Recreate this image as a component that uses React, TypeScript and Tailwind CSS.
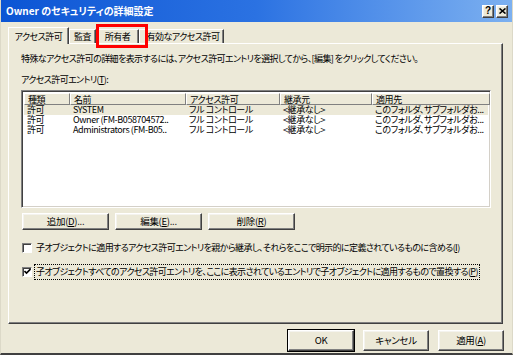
import React from "react";

type Entry = {
  kind: string;
  name: string;
  access: string;
  inherited: string;
  applies: string;
};

const ENTRIES: Entry[] = [
  { kind: "許可", name: "SYSTEM", access: "フル コントロール", inherited: "<継承なし>", applies: "このフォルダ、サブフォルダお..." },
  { kind: "許可", name: "Owner (FM-B058704572..", access: "フル コントロール", inherited: "<継承なし>", applies: "このフォルダ、サブフォルダお..." },
  { kind: "許可", name: "Administrators (FM-B05..", access: "フル コントロール", inherited: "<継承なし>", applies: "このフォルダ、サブフォルダお..." },
];

const COLUMNS = [
  { label: "種類", width: "w-[46px]" },
  { label: "名前", width: "w-[116px]" },
  { label: "アクセス許可", width: "w-[94px]" },
  { label: "継承元", width: "w-[92px]" },
  { label: "適用先", width: "w-[118px]" },
];

const raised =
  "border border-t-white border-l-white border-r-[#404040] border-b-[#404040] shadow-[inset_-1px_-1px_0_#808080,inset_1px_1px_0_#f4f3ee]";

function PushButton({ children, className = "" }: { children: React.ReactNode; className?: string }) {
  return (
    <div className={`flex items-center justify-center bg-[#ece9d8] ${raised} ${className}`}>
      <span className="text-[9.5px] leading-none whitespace-nowrap tracking-[-0.3px]">{children}</span>
    </div>
  );
}

function CheckBox({ checked }: { checked: boolean }) {
  return (
    <div className="w-[10px] h-[10px] shrink-0 bg-white border border-t-[#808080] border-l-[#808080] border-r-white border-b-white shadow-[inset_1px_1px_0_#404040] flex items-center justify-center">
      {checked ? (
        <svg width="7" height="7" viewBox="0 0 7 7">
          <path d="M0.5 3 L2.5 5 L6.5 1" stroke="#000" strokeWidth="1.6" fill="none" />
        </svg>
      ) : null}
    </div>
  );
}

export default function App() {
  return (
    <div className="w-[513px] h-[355px] overflow-hidden bg-[#ece9d8] text-black font-['Noto_Sans_CJK_JP','Noto_Sans',sans-serif] [font-feature-settings:'palt'] relative border-x border-x-[#dcd9c8] border-b-2 border-b-[#404040]">
      {/* title bar */}
      <div className="h-[22px] flex items-center pl-[5px] pr-[4px] bg-gradient-to-r from-[#0b55d4] via-[#2b72e2] to-[#7cb0f0]">
        <span className="text-white font-bold text-[10px] leading-none whitespace-nowrap">
          Owner のセキュリティの詳細設定
        </span>
        <div className="ml-auto flex gap-[2px]">
          <div className={`w-[12px] h-[13px] bg-[#ece9d8] flex items-center justify-center ${raised}`}>
            <span className="text-[10px] font-bold leading-none font-['Liberation_Sans',sans-serif]">?</span>
          </div>
          <div className={`w-[12px] h-[13px] bg-[#ece9d8] flex items-center justify-center ${raised}`}>
            <svg width="7" height="6" viewBox="0 0 7 6">
              <path d="M0.5 0.5 L6.5 5.5 M6.5 0.5 L0.5 5.5" stroke="#000" strokeWidth="1.6" />
            </svg>
          </div>
        </div>
      </div>

      <div className="px-[7px]">
        {/* tabs */}
        <div className="mt-[5px] h-[16px] flex items-end text-[9px] leading-none whitespace-nowrap tracking-[-0.5px]">
          <div className="w-[61px] h-[17px] -mb-px relative z-10 bg-[#ece9d8] border-t border-l border-white border-r border-r-[#404040] shadow-[inset_-1px_0_0_#808080] flex items-center justify-center">
            アクセス許可
          </div>
          <div className="w-[27px] h-[14px] border-t border-l border-white border-r border-r-[#404040] shadow-[inset_-1px_0_0_#808080] flex items-center justify-center">
            監査
          </div>
          <div className="w-[43px] h-[14px] border-t border-l border-white border-r border-r-[#404040] shadow-[inset_-1px_0_0_#808080] flex items-center justify-center">
            所有者
          </div>
          <div className="w-[85px] h-[14px] border-t border-l border-white border-r border-r-[#404040] shadow-[inset_-1px_0_0_#808080] flex items-center justify-center pl-[3px]">
            有効なアクセス許可
          </div>
        </div>

        {/* panel */}
        <div className="w-[495px] h-[281px] border border-t-white border-l-white border-r-[#404040] border-b-[#404040] shadow-[inset_-1px_-1px_0_#808080] pl-[12px] pt-[9px] text-[9px] tracking-[-0.6px] whitespace-nowrap">
          <div className="leading-[12px]">
            特殊なアクセス許可の詳細を表示するには、アクセス許可エントリを選択してから、[編集] をクリックしてください。
          </div>
          <div className="mt-[9px] leading-[12px]">
            アクセス許可エントリ(<span className="underline">T</span>):
          </div>

          {/* list view */}
          <div className="mt-[4px] w-[470px] h-[118px] bg-white border border-t-[#808080] border-l-[#808080] border-r-white border-b-white shadow-[inset_1px_1px_0_#404040,inset_-1px_-1px_0_#d4d0c8] p-[2px] tracking-[-0.4px]">
            <div className="flex h-[12px] text-[9px] leading-none">
              {COLUMNS.map((c) => (
                <div
                  key={c.label}
                  className={`${c.width} shrink-0 bg-[#ece9d8] border border-t-white border-l-white border-r-[#808080] border-b-[#808080] flex items-center pl-[3px]`}
                >
                  {c.label}
                </div>
              ))}
            </div>
            {ENTRIES.map((e, i) => (
              <div
                key={e.name}
                className={`flex items-center h-[10px] text-[9px] leading-[10px] ${i === 0 ? "bg-[#ece9d8]" : ""}`}
              >
                <div className="w-[46px] pl-[3px] shrink-0">{e.kind}</div>
                <div className="w-[116px] pl-[3px] shrink-0">{e.name}</div>
                <div className="w-[94px] pl-[3px] shrink-0">{e.access}</div>
                <div className="w-[92px] pl-[3px] shrink-0">{e.inherited}</div>
                <div className="w-[118px] pl-[3px] shrink-0">{e.applies}</div>
              </div>
            ))}
          </div>

          {/* list buttons */}
          <div className="mt-[5px] flex gap-[6px] pl-[1px]">
            <PushButton className="w-[87px] h-[17px]">
              追加(<span className="underline">D</span>)...
            </PushButton>
            <PushButton className="w-[87px] h-[17px]">
              編集(<span className="underline">E</span>)...
            </PushButton>
            <PushButton className="w-[87px] h-[17px]">
              削除(<span className="underline">R</span>)
            </PushButton>
          </div>

          {/* options */}
          <div className="mt-[12px] flex items-center gap-[4px] pl-[1px] h-[12px]">
            <CheckBox checked={false} />
            <span className="leading-[12px]">
              子オブジェクトに適用するアクセス許可エントリを親から継承し、それらをここで明示的に定義されているものに含める(<span className="underline">I</span>)
            </span>
          </div>
          <div className="mt-[10px] flex items-center gap-[2px] pl-[1px] h-[15px]">
            <CheckBox checked />
            <span className="leading-[12px] border border-dotted border-black px-[1px] py-[1px]">
              子オブジェクトすべてのアクセス許可エントリを、ここに表示されているエントリで子オブジェクトに適用するもので置換する(<span className="underline">P</span>)
            </span>
          </div>
        </div>

        {/* dialog buttons */}
        <div className="mt-[6px] flex justify-end gap-[9px] pr-[1px]">
          <PushButton className="w-[66px] h-[21px] outline outline-1 outline-black">OK</PushButton>
          <PushButton className="w-[66px] h-[21px]">キャンセル</PushButton>
          <PushButton className="w-[66px] h-[21px]">
            適用(<span className="underline">A</span>)
          </PushButton>
        </div>
      </div>

      {/* annotation */}
      <div className="absolute left-[95px] top-[24px] w-[52px] h-[24px] border-[3px] border-[#ff0000]" />
    </div>
  );
}
